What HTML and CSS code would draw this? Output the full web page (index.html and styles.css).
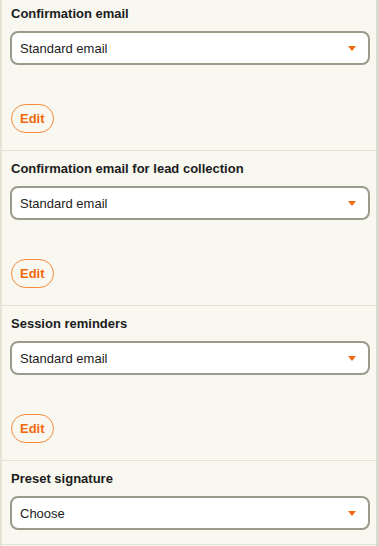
FILE: index.html
```html
<!DOCTYPE html>
<html lang="en">
<head>
    <meta charset="UTF-8">
    <meta name="viewport" content="width=device-width, initial-scale=1.0">
    <title>Email settings</title>
    <link rel="stylesheet" href="styles.css">
</head>
<body>
    <div class="panel">
        <div class="section first">
            <div class="label">Confirmation email</div>
            <div class="select">
                <span>Standard email</span>
                <span class="caret"></span>
            </div>
            <button class="edit">Edit</button>
        </div>

        <div class="section">
            <div class="label">Confirmation email for lead collection</div>
            <div class="select">
                <span>Standard email</span>
                <span class="caret"></span>
            </div>
            <button class="edit">Edit</button>
        </div>

        <div class="section">
            <div class="label">Session reminders</div>
            <div class="select">
                <span>Standard email</span>
                <span class="caret"></span>
            </div>
            <button class="edit">Edit</button>
        </div>

        <div class="section last">
            <div class="label">Preset signature</div>
            <div class="select">
                <span>Choose</span>
                <span class="caret"></span>
            </div>
        </div>
    </div>
</body>
</html>
```

FILE: styles.css
```css
html, body {
    margin: 0;
    padding: 0;
    background: #f8f8f1;
    height: 100%;
    overflow: hidden;
}
body {
    font-family: "Liberation Sans", Arial, sans-serif;
    font-size: 13px;
    color: #1c1c1c;
}
.panel {
    min-height: 100%;
    border-left: 2px solid #e2e3d5;
    border-right: 3px solid #d9dacd;
    background: #f8f8f1;
}
.section {
    border-top: 1px solid #e2e4d2;
    padding: 9px 6px 17px 8px;
}
.section.first {
    border-top: none;
    padding-top: 5px;
}
.section.last {
    padding-bottom: 14px;
    border-bottom: 1px solid #e2e4d2;
}
.label {
    font-weight: bold;
    line-height: 18px;
    margin-bottom: 8px;
    padding-left: 1px;
}
.select {
    display: flex;
    align-items: center;
    justify-content: space-between;
    height: 30px;
    background: #fff;
    border: 2px solid #9b9b8b;
    border-radius: 8px;
    padding: 0 12px 0 8px;
}
.caret {
    width: 0;
    height: 0;
    border-left: 4px solid transparent;
    border-right: 4px solid transparent;
    border-top: 5px solid #f26b12;
}
.edit {
    display: block;
    margin-top: 39px;
    height: 29px;
    padding: 0 8px;
    background: transparent;
    border: 1px solid #f38a3c;
    border-radius: 15px;
    color: #f06a0c;
    font-family: inherit;
    font-size: 13px;
    font-weight: bold;
    margin-left: 1px;
}
```
